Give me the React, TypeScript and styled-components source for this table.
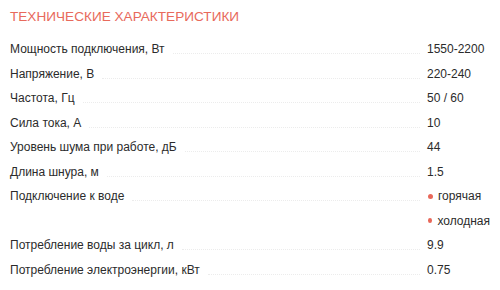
import React from "react";
import styled, { createGlobalStyle } from "styled-components";

const Global = createGlobalStyle`
  html, body { margin: 0; padding: 0; background: #ffffff; }
  body { font-family: "Liberation Sans", Arial, sans-serif; }
`;

const Page = styled.div`
  width: 500px;
  height: 290px;
  padding: 9px 10px 0 10px;
  box-sizing: border-box;
  overflow: hidden;
`;

const Title = styled.h2`
  margin: 0 0 12px 0;
  font-size: 13.6px;
  line-height: 16px;
  font-weight: 400;
  color: #e86a5c;
  text-transform: uppercase;
`;

const List = styled.div`
  display: flex;
  flex-direction: column;
`;

const Row = styled.div`
  display: flex;
  align-items: flex-start;
`;

const Label = styled.div`
  font-size: 12px;
  line-height: 24.5px;
  color: #2b2b2b;
  white-space: nowrap;
`;

const Leader = styled.div`
  flex: 1;
  height: 16px;
  margin: 0 7px 0 8px;
  border-bottom: 1px dotted #ececec;
`;

const Values = styled.div`
  width: 63px;
  display: flex;
  flex-direction: column;
`;

const Value = styled.div`
  font-size: 12px;
  line-height: 24.5px;
  color: #2b2b2b;
  white-space: nowrap;
  display: flex;
  align-items: center;
`;

const Dot = styled.span`
  width: 5px;
  height: 5px;
  border-radius: 50%;
  background: #e8685a;
  margin: 0 5px 0 1px;
`;

type Spec = { label: string; values: string[]; bullets?: boolean };

const specs: Spec[] = [
  { label: "Мощность подключения, Вт", values: ["1550-2200"] },
  { label: "Напряжение, В", values: ["220-240"] },
  { label: "Частота, Гц", values: ["50 / 60"] },
  { label: "Сила тока, А", values: ["10"] },
  { label: "Уровень шума при работе, дБ", values: ["44"] },
  { label: "Длина шнура, м", values: ["1.5"] },
  { label: "Подключение к воде", values: ["горячая", "холодная"], bullets: true },
  { label: "Потребление воды за цикл, л", values: ["9.9"] },
  { label: "Потребление электроэнергии, кВт", values: ["0.75"] },
];

export default function App() {
  return (
    <>
      <Global />
      <Page>
        <Title>Технические характеристики</Title>
        <List>
          {specs.map((s) => (
            <Row key={s.label}>
              <Label>{s.label}</Label>
              <Leader />
              <Values>
                {s.values.map((v) => (
                  <Value key={v}>
                    {s.bullets && <Dot />}
                    {v}
                  </Value>
                ))}
              </Values>
            </Row>
          ))}
        </List>
      </Page>
    </>
  );
}
